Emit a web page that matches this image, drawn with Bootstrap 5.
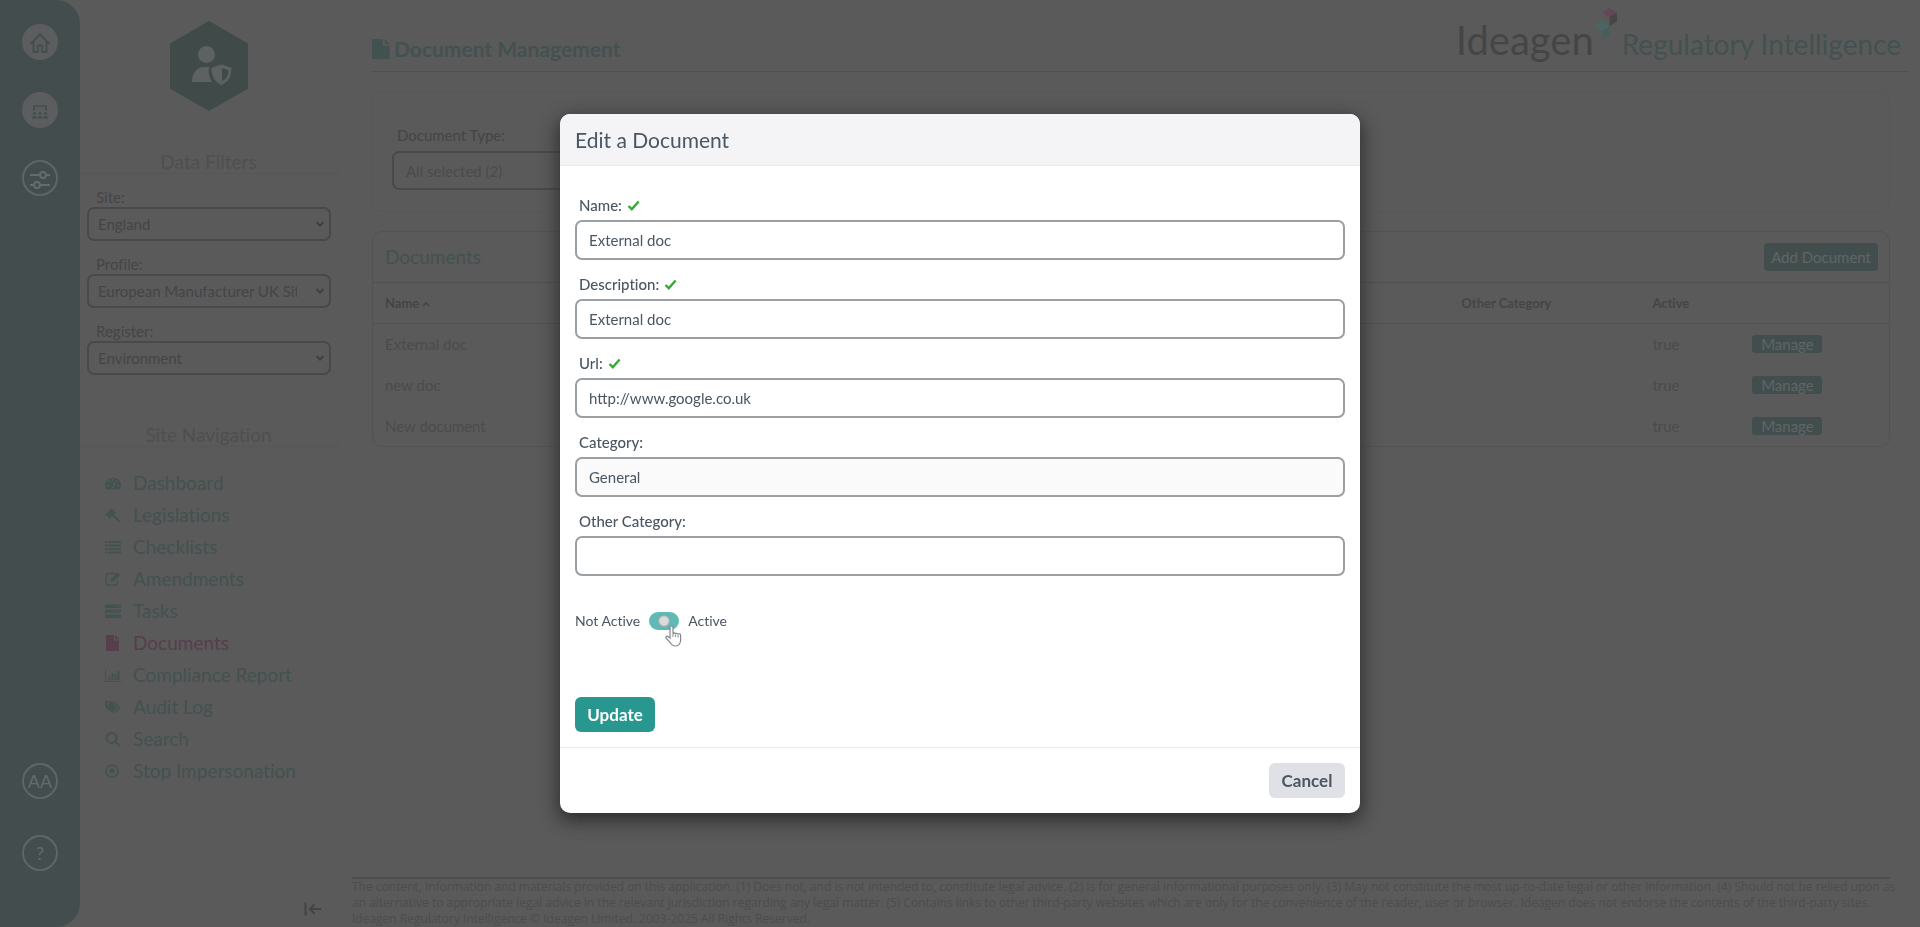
<!DOCTYPE html>
<html lang="en">
<head>
<meta charset="utf-8">
<meta name="viewport" content="width=device-width, initial-scale=1">
<title>Document Management</title>
<link href="https://cdn.jsdelivr.net/npm/bootstrap@5.3.0/dist/css/bootstrap.min.css" rel="stylesheet">
<style>
:root{--dim:#5a5a5a;--dim-text:#4b4b4d;--dim-teal:#435151;--ink:#4a5663}
body{background:var(--dim);color:var(--dim-text);font-family:Lato,"Liberation Sans",sans-serif;font-size:15px;line-height:20px;font-variant-ligatures:none}
a{text-decoration:none;color:inherit}
.rail{width:80px;background:#434d4e;border-radius:0 24px 24px 0;padding:24px 0 56px}
.rail-btn{width:36px;height:36px;border-radius:50%;border:2px solid #5e6566;background:none;color:#656b6c;font-size:18px;padding:0}
.rail-btn.filled{background:#5c5d5e;border-color:#5c5d5e;color:#434d4e}
.rail-top{gap:32px}.rail-low{gap:36px}
.side{width:258px;border-right:1px solid #585858}
.hexagon{margin:21px auto 0}
.side-head{font-size:19px;line-height:22px;text-align:center;color:#4f4f4f;border-bottom:1px solid #565656}
.side-head.first{margin-top:40px}
.side-head.second{margin-top:36px}
.filters{padding-top:13px}
.side label{padding-left:16px;display:block;color:#454547;line-height:20px}
.side .form-select{height:34px;width:244px;margin:0 7px 13px;padding:0 32px 0 9px;border:2px solid #49494b;border-radius:7px;font-size:15px;line-height:20px;color:#454547;background-color:transparent;background-image:none}
.pick{position:relative}
.pick svg{position:absolute;right:12px;top:12px;width:10px;height:10px;pointer-events:none}
.menu{padding-top:20px}
.menu a{display:flex;align-items:center;height:32px;padding-left:25px;gap:12px;color:var(--dim-teal);font-size:19px}
.menu svg{width:16px;height:16px}
.menu a.on{color:#563e4c}
.collapse-btn{margin:0 15px 10px;line-height:0}
.content{padding-left:14px;min-width:0}
.top{height:72px;border-bottom:1px solid #515151;color:var(--dim-teal);margin:0 11px 0 20px}
.page-title{padding-top:26px;gap:3px}
.page-title h1{font-size:21px;line-height:24px;font-weight:700;margin:0}
.brand{padding-top:8px}
.brand-a{font-size:40px;line-height:48px;color:#454547}
.brand-b{font-size:28px;line-height:36px;color:var(--dim-teal)}
.brand svg{margin:-8px 4px 0 0}
.work{margin:19px 30px 0 20px}
.panel{border:1px solid #535353;border-radius:10px;margin-bottom:19px}
.panel.faint{border-color:#575757;height:121px;padding:33px 19px 0}
.panel label{margin:0 0 6px 5px;color:#454547}
.picker{height:39px;width:400px;border:2px solid #49494b;border-radius:7px;background:none;color:var(--dim-text);text-align:left;padding:0 12px}
.panel-top{height:51px;padding:0 11px 0 12px;border-bottom:1px solid #515151}
.panel-top h2{font-size:19px;font-weight:400;line-height:24px;margin:0;color:#435150}
.btn-add{background:#424e4e;color:#5f6565;border:0;border-radius:4px;height:28px;padding:0 7px}
.docs{width:100%;table-layout:fixed}
.docs th{height:40px;font-size:13px;border-bottom:1px solid #515151;color:#454547}
.docs td{height:41px}
.docs tr>*{padding:0 12px}
.c-name{width:71%}.c-other{width:12.6%}.c-active{width:6.6%}
.btn-man{background:#424e4e;color:#5f6565;border:0;border-radius:3px;height:18px;line-height:18px;width:70px;padding:0;display:block}
.legal{border-top:2px solid #4d4d4d;font-family:"Open Sans",Lato,sans-serif;font-size:12px;line-height:16px;color:#4d4d4d;margin:auto 30px 0 0}
.modal-content{border:0;border-radius:10px;color:var(--ink);box-shadow:0 6px 18px 2px #2e2e2e}
.modal-header{background:#f4f4f7;height:52px;padding:0 15px;border-bottom:1px solid #ececef;border-radius:10px 10px 0 0}
.modal-title{font-size:21px;line-height:26px;font-weight:400}
.modal-body{padding:29px 15px 15px}
.modal-body .form-label{display:flex;align-items:center;gap:5px;height:20px;margin:0 0 5px 4px;font-weight:500}
.modal-body .form-control{height:40px;padding:0 12px;border:2px solid #9a9fa3;border-radius:7px;color:var(--ink);font-size:15px;margin-bottom:14px;background:#fff}
.modal-body .form-control.tint{background:#fafafa}
.modal-body .form-label svg{width:13px;height:11px}
.toggle{margin:35px 0 66px;gap:9px;height:20px;position:relative;font-size:14px}
.toggle .form-check-input{width:30px;height:18px;margin:0;border:0;background-color:#5fbab6;background-image:radial-gradient(circle,#dadada 0 4px,#7fa9a8 6px,transparent 7px);background-position:2px 0;background-size:30px 18px}
.toggle .hand{position:absolute;left:90px;top:14px;width:17px;height:22px}
.btn-up{background:#279790;color:#fff;font-weight:700;width:80px;height:35px;padding:0;border-radius:6px;font-size:17px;line-height:20px}
.btn-can{background:#e0e1e6;color:var(--ink);font-weight:700;height:35px;width:76px;padding:0;border-radius:6px;font-size:17px;line-height:20px}
.modal-footer{padding:15px;height:66px;border-top:1px solid #e9e9eb}
.modal-footer>*{margin:0}
</style>
</head>
<body>
<svg width="0" height="0" class="position-absolute" aria-hidden="true">
<symbol id="tick" viewBox="0 0 13 11"><path d="M1.5 6l3.3 3.2L11.6 1.5" fill="none" stroke="#36a836" stroke-width="2.4"/></symbol>
<symbol id="chev" viewBox="0 0 10 10"><path d="M1.5 3L5 6.6 8.500 3" fill="none" stroke="#3f3f41" stroke-width="2"/></symbol>
<symbol id="doc" viewBox="0 0 16 16"><path d="M1 0h8v5.500h5V16H1zM10.300 0L14 4.300h-3.700z" fill="currentColor"/></symbol>
</svg>

<div class="d-flex vh-100 overflow-hidden">
  <nav class="rail d-flex flex-column justify-content-between align-items-center flex-shrink-0" aria-label="Main">
    <div class="rail-top d-flex flex-column">
      <button class="rail-btn filled" aria-label="Home"><svg width="22" height="22" viewBox="0 0 22 22" fill="none" stroke="currentColor" stroke-width="1.800"><path d="M2 11.500l9-9 9 9M4.500 9.500V20h4.300v-6.500h4.400V20h4.300V9.500" stroke-linejoin="round" stroke-linecap="round"/></svg></button>
      <button class="rail-btn filled" aria-label="Training"><svg width="18" height="16" viewBox="0 0 18 16" fill="currentColor"><path d="M3 7V2h12v5" fill="none" stroke="currentColor" stroke-width="1.600"/><circle cx="3.500" cy="9.500" r="1.500"/><circle cx="9" cy="9.500" r="1.500"/><circle cx="14.500" cy="9.500" r="1.500"/><path d="M1 14.500l1-2.500h3l1 2.500zM6.500 14.500l1-2.500h3l1 2.500zM12 14.500l1-2.500h3l1 2.500z"/></svg></button>
      <button class="rail-btn" aria-label="Settings"><svg width="22" height="18" viewBox="0 0 22 18" fill="none" stroke="currentColor" stroke-width="2"><path d="M1 4h10M17 4h4M1 14h4M11 14h10"/><circle cx="14" cy="4" r="3"/><circle cx="8" cy="14" r="3"/></svg></button>
    </div>
    <div class="rail-low d-flex flex-column"><button class="rail-btn">AA</button><button class="rail-btn">?</button></div>
  </nav>

  <aside class="side d-flex flex-column flex-shrink-0">
    <svg class="hexagon d-block flex-shrink-0" width="78" height="90" viewBox="0 0 78 90"><path d="M39 0l39 22.500v45L39 90 0 67.500v-45z" fill="#3f4a49"/><g fill="#5e6162"><circle cx="36.500" cy="33.500" r="8.500"/><path d="M22 61c0-9 5-15 12-15h4v15zM38 46v15h4c-3-5-4-10-3-15z"/><path d="M51.500 43L62 46.500c0 9-3 14.500-10.500 18C44 61 41 55.500 41 46.500z" stroke="#3f4a49" stroke-width="1"/></g><path d="M52 47l6.500 2.200c0 5-2 8.500-6.500 11z" fill="#3f4a49"/></svg>
    <div class="side-head first">Data Filters</div>
    <div class="filters">
      <label for="site">Site:</label>
      <div class="pick"><select id="site" class="form-select"><option>England</option></select><svg><use href="#chev"/></svg></div>
      <label for="profile">Profile:</label>
      <div class="pick"><select id="profile" class="form-select"><option>European Manufacturer UK Site</option></select><svg><use href="#chev"/></svg></div>
      <label for="register">Register:</label>
      <div class="pick"><select id="register" class="form-select"><option>Environment</option></select><svg><use href="#chev"/></svg></div>
    </div>
    <div class="side-head second">Site Navigation</div>
    <nav class="menu" aria-label="Site">
      <a href="#"><svg viewBox="0 0 16 16"><path d="M1.500 14.500a8 7.500 0 1113 0z" fill="currentColor"/><g fill="#5a5a5a"><circle cx="2.800" cy="10.500" r="1.100"/><circle cx="4.500" cy="6.500" r="1.100"/><circle cx="8" cy="4.800" r="1.100"/><circle cx="11.700" cy="6.500" r="1.100"/><circle cx="13.200" cy="10.500" r="1.100"/><path d="M7 13l2.400-6.500.8.300L9 13z"/></g></svg>Dashboard</a>
      <a href="#"><svg viewBox="0 0 16 16" fill="currentColor"><path d="M6 1l5 5-1 1-.6-.4-1 1L15.500 14 14 15.500 7 9 5.500 10.500l.5.600-1 1-5-5 1-1 .7.500 4-4L5.200 2z"/></svg>Legislations</a>
      <a href="#"><svg viewBox="0 0 16 16" fill="currentColor"><path d="M0 2h2.500v2H0zM3.500 2H16v2H3.500zM0 5.500h2.500v2H0zM3.500 5.500H16v2H3.500zM0 9h2.500v2H0zM3.500 9H16v2H3.500zM0 12.500h2.500v2H0zM3.500 12.500H16v2H3.500z"/></svg>Checklists</a>
      <a href="#"><svg viewBox="0 0 16 16" fill="none" stroke="currentColor" stroke-width="1.300"><path d="M10.500 2.500H3a2 2 0 00-2 2V12a2 2 0 002 2h7.500a2 2 0 002-2V9.500"/><path d="M6 10.500V8l6.500-6.500L15 4l-6.500 6.500z" fill="currentColor" stroke="none"/></svg>Amendments</a>
      <a href="#"><svg viewBox="0 0 16 16" fill="currentColor"><path d="M0 1.500h16V5H0zM0 6.500h16V10H0zM0 11.500h16V15H0z"/><path d="M10 3.200h5M7 8.200h8M12 13.200h3" stroke="#505757"/></svg>Tasks</a>
      <a href="#" class="on"><svg><use href="#doc"/></svg>Documents</a>
      <a href="#"><svg viewBox="0 0 16 16" fill="none" stroke="currentColor"><path d="M.6 2v12.400H16"/><path d="M4.500 9v4M7.500 6v7M10.500 7.500V13M13.500 3.500V13" stroke-width="2"/></svg>Compliance Report</a>
      <a href="#"><svg viewBox="0 0 16 16" fill="currentColor"><path fill-rule="evenodd" d="M0 2h6l6.500 6.500L7 14 0 7.500zM2.800 3.500a1.200 1.200 0 100 2.400 1.200 1.200 0 000-2.400z"/><path d="M8 2l6.800 6.500L9.500 14" fill="none" stroke="currentColor" stroke-width="1.400"/></svg>Audit Log</a>
      <a href="#"><svg viewBox="0 0 16 16" fill="none" stroke="currentColor" stroke-width="2"><circle cx="6.500" cy="7" r="5"/><path d="M10 10.500l4.500 4.500"/></svg>Search</a>
      <a href="#"><svg viewBox="0 0 16 16" fill="none" stroke="currentColor" stroke-width="1.600"><circle cx="7" cy="8" r="6"/><rect x="5.500" y="6.500" width="3" height="3" fill="currentColor"/></svg>Stop Impersonation</a>
    </nav>
    <button class="collapse-btn btn p-0 border-0 mt-auto align-self-end" aria-label="Collapse sidebar"><svg width="18" height="16" viewBox="0 0 18 16" fill="none" stroke="#434345" stroke-width="2"><path d="M1.500 1.500v13M17 8H6M10.500 3.500L6 8l4.500 4.500"/></svg></button>
  </aside>

  <main class="content d-flex flex-column flex-grow-1">
    <header class="top d-flex align-items-center flex-shrink-0">
      <div class="page-title d-flex align-items-center">
        <svg width="19" height="20" viewBox="1 0 14 16" preserveAspectRatio="none"><use href="#doc" width="16" height="16"/></svg>
        <h1>Document Management</h1>
      </div>
      <div class="brand ms-auto d-flex align-items-baseline pe-2" aria-label="Ideagen Regulatory Intelligence">
        <span class="brand-a">Ideagen</span>
        <svg class="align-self-start flex-shrink-0" width="24" height="34" viewBox="0 0 24 34"><path d="M15 0l8 4.500-7.500 4.500-7.500-4.500z" fill="#614858"/><path d="M23 4.500v9L15.500 18V9z" fill="#464648"/><path d="M0 18l7.500-4.500L15.500 18 8.500 22.500z" fill="#4a6664"/><path d="M15.500 18v9l-7 4.500v-9z" fill="#455e5c"/></svg>
        <span class="brand-b">Regulatory Intelligence</span>
      </div>
    </header>
    <div class="work">
      <section class="panel faint">
        <label for="dtype" class="d-block">Document Type:</label>
        <button id="dtype" class="picker">All selected (2)</button>
      </section>
      <section class="panel">
        <div class="panel-top d-flex align-items-center justify-content-between"><h2>Documents</h2><button class="btn-add">Add Document</button></div>
        <table class="docs">
          <colgroup><col class="c-name"><col class="c-other"><col class="c-active"><col></colgroup>
          <thead><tr><th>Name <svg width="8" height="6" viewBox="0 0 8 6"><path d="M1 5l3-3 3 3" fill="none" stroke="currentColor" stroke-width="1.600"/></svg></th><th>Other Category</th><th>Active</th><th></th></tr></thead>
          <tbody>
            <tr><td>External doc</td><td></td><td>true</td><td><button class="btn-man">Manage</button></td></tr>
            <tr><td>new doc</td><td></td><td>true</td><td><button class="btn-man">Manage</button></td></tr>
            <tr><td>New document</td><td></td><td>true</td><td><button class="btn-man">Manage</button></td></tr>
          </tbody>
        </table>
      </section>
    </div>
    <footer class="legal text-nowrap">The content, information and materials provided on this application. (1) Does not, and is not intended to, constitute legal advice. (2) Is for general informational purposes only. (3) May not constitute the most up-to-date legal or other information. (4) Should not be relied upon as<br>an alternative to appropriate legal advice in the relevant jurisdiction regarding any legal matter. (5) Contains links to other third-party websites which are only for the convenience of the reader, user or browser. Ideagen does not endorse the contents of the third-party sites.<br>Ideagen Regulatory Intelligence © Ideagen Limited. 2003-2025 All Rights Reserved.</footer>
  </main>
</div>

<div class="modal d-block" tabindex="-1" role="dialog" aria-labelledby="mt">
  <div class="modal-dialog modal-lg modal-dialog-centered">
    <div class="modal-content">
      <div class="modal-header"><h5 class="modal-title" id="mt">Edit a Document</h5></div>
      <div class="modal-body">
        <label class="form-label" for="n">Name: <svg><use href="#tick"/></svg></label>
        <input class="form-control" id="n" value="External doc">
        <label class="form-label" for="d">Description: <svg><use href="#tick"/></svg></label>
        <input class="form-control" id="d" value="External doc">
        <label class="form-label" for="u">Url: <svg><use href="#tick"/></svg></label>
        <input class="form-control" id="u" value="http://www.google.co.uk">
        <label class="form-label" for="c">Category:</label>
        <select class="form-control tint" id="c"><option>General</option></select>
        <label class="form-label" for="o">Other Category:</label>
        <input class="form-control" id="o">
        <div class="toggle d-flex align-items-center form-switch p-0">
          <label for="act">Not Active</label><input class="form-check-input" type="checkbox" role="switch" id="act" checked><label for="act">Active</label>
          <svg class="hand" viewBox="0 0 17 22"><path d="M5 13V2.500a1.500 1.500 0 013 0V9c0-1.500 2.600-1.500 2.600.2 0-1.400 2.500-1.300 2.500.4 0-1.200 2.500-1.100 2.500.6V15c0 3-1.600 6-5 6-3 0-4.200-1.300-5.400-3.500L1 13c-.6-1.500 1.300-2.400 2.300-1.200z" fill="#fff" stroke="#85858f" stroke-width="1.200"/><path d="M8 9v3M10.600 9.500V12M13.100 10v2.500" stroke="#85858f"/></svg>
        </div>
        <button class="btn btn-up">Update</button>
      </div>
      <div class="modal-footer"><button class="btn btn-can">Cancel</button></div>
    </div>
  </div>
</div>
<script src="https://cdn.jsdelivr.net/npm/bootstrap@5.3.0/dist/js/bootstrap.bundle.min.js"></script>
</body>
</html>
